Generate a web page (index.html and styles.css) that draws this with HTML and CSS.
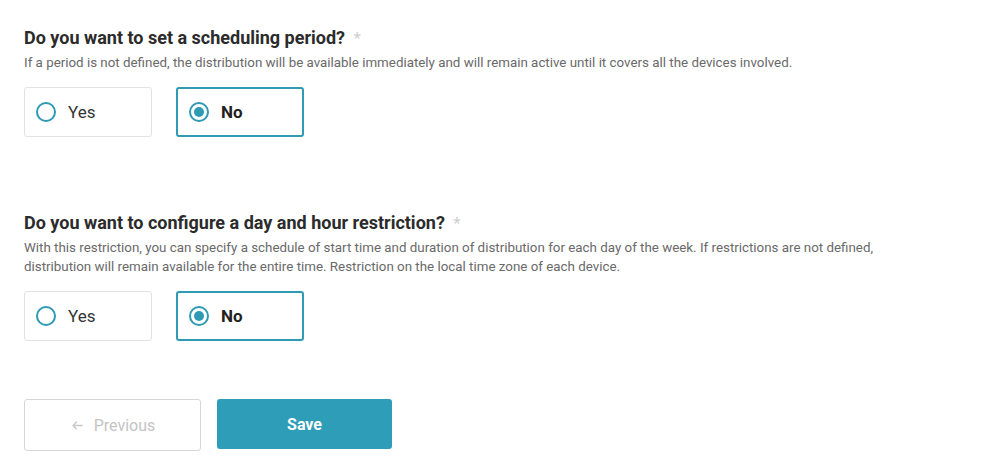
FILE: index.html
```html
<!DOCTYPE html>
<html lang="en">
<head>
<meta charset="utf-8">
<title>Distribution schedule</title>
<link rel="stylesheet" href="styles.css">
</head>
<body>
<div class="page">
  <section class="question">
    <h2 class="q-title">Do you want to set a scheduling period? <span class="req">*</span></h2>
    <p class="q-desc">If a period is not defined, the distribution will be available immediately and will remain active until it covers all the devices involved.</p>
    <div class="options">
      <label class="option"><span class="radio"></span><span class="opt-label">Yes</span></label>
      <label class="option selected"><span class="radio"></span><span class="opt-label">No</span></label>
    </div>
  </section>
  <section class="question second">
    <h2 class="q-title">Do you want to configure a day and hour restriction? <span class="req">*</span></h2>
    <p class="q-desc">With this restriction, you can specify a schedule of start time and duration of distribution for each day of the week. If restrictions are not defined, distribution will remain available for the entire time. Restriction on the local time zone of each device.</p>
    <div class="options">
      <label class="option"><span class="radio"></span><span class="opt-label">Yes</span></label>
      <label class="option selected"><span class="radio"></span><span class="opt-label">No</span></label>
    </div>
  </section>
  <div class="actions">
    <button class="btn btn-prev"><svg class="arrow" width="11" height="9" viewBox="0 0 11 9"><path d="M10.5 4.5H1M4.8 0.8L1 4.5l3.8 3.7" fill="none" stroke="#c8c8c8" stroke-width="1.3"/></svg><span>Previous</span></button>
    <button class="btn btn-save">Save</button>
  </div>
</div>
</body>
</html>
```

FILE: styles.css
```css
html, body {
  margin: 0;
  padding: 0;
  background: #ffffff;
}
body {
  font-family: Roboto, "Liberation Sans", Arial, sans-serif;
  color: #333333;
}
.page {
  padding: 27px 24px 0 24px;
  width: 900px;
}
.question {
  display: flex;
  flex-direction: column;
}
.second {
  margin-top: 75px;
}
.q-title {
  margin: 0;
  font-size: 18px;
  font-weight: 700;
  line-height: 22px;
  color: #2b2b2b;
}
.req {
  color: #d0d0d0;
  font-weight: 400;
  font-size: 17px;
  margin-left: 4px;
}
.q-desc {
  margin: 4px 0 0 0;
  font-size: 13.35px;
  line-height: 19px;
  color: #6a6a6a;
}
.options {
  display: flex;
  gap: 24px;
  margin-top: 15px;
}
.option {
  box-sizing: border-box;
  width: 128px;
  height: 50px;
  border: 1px solid #e3e3e3;
  border-radius: 3px;
  display: flex;
  align-items: center;
  padding-left: 11px;
  gap: 12px;
}
.option.selected {
  border: 2px solid #2e9ab4;
  padding-left: 11px;
}
.radio {
  box-sizing: border-box;
  width: 20px;
  height: 20px;
  border-radius: 50%;
  border: 2px solid #2e9ab4;
  display: flex;
  align-items: center;
  justify-content: center;
}
.selected .radio::after {
  content: "";
  width: 10px;
  height: 10px;
  border-radius: 50%;
  background: #2e9ab4;
}
.opt-label {
  font-size: 17px;
  color: #333333;
}
.selected .opt-label {
  font-weight: 700;
  color: #222222;
}
.actions {
  display: flex;
  gap: 16px;
  margin-top: 58px;
}
.btn {
  box-sizing: border-box;
  height: 52px;
  border-radius: 3px;
  font-family: Roboto, "Liberation Sans", Arial, sans-serif;
  font-size: 16px;
  cursor: pointer;
  display: flex;
  align-items: center;
  justify-content: center;
}
.btn-prev {
  width: 177px;
  background: #ffffff;
  border: 1px solid #d6d6d6;
  color: #c4c4c4;
  gap: 11px;
  padding-right: 4px;
}
.arrow {
  display: block;
}
.btn-save {
  width: 175px;
  height: 50px;
  background: #2e9db7;
  border: none;
  color: #ffffff;
  font-weight: 700;
}
```
